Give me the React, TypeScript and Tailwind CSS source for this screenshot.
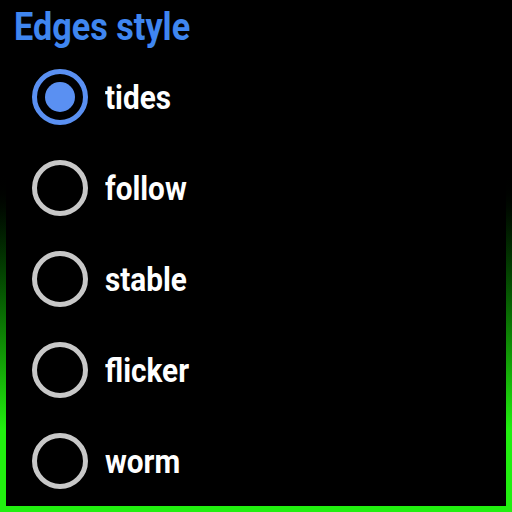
const options = ['tides', 'follow', 'stable', 'flicker', 'worm'];

export default function App() {
  const selected = 'tides';
  return (
    <div className="w-[512px] h-[512px] bg-gradient-to-b from-black from-[33%] to-[#22f010] to-[84%] p-[6px] pt-0">
      <div
        className="w-full h-full bg-black pl-[8px] pt-[6px]"
        style={{ fontFamily: 'Roboto, "Liberation Sans", sans-serif' }}
      >
        <h1 className="text-[38px] font-bold leading-[42px] text-[#3f86f0] origin-left scale-x-[0.9]">
          Edges style
        </h1>
        <div className="flex flex-col gap-[35px] mt-[21px] pl-[18px]">
          {options.map((o) => (
            <div key={o} className="flex items-center gap-[17px] h-[56px]">
              <div
                className={
                  o === selected
                    ? 'w-[56px] h-[56px] rounded-full border-[5px] border-[#5a90f2] flex items-center justify-center'
                    : 'w-[56px] h-[56px] rounded-full border-[5px] border-[#c8c8c8]'
                }
              >
                {o === selected && <div className="w-[30px] h-[30px] rounded-full bg-[#5a90f2]" />}
              </div>
              <span className="text-[33px] font-bold text-white origin-left scale-x-[0.9] leading-none">
                {o}
              </span>
            </div>
          ))}
        </div>
      </div>
    </div>
  );
}
